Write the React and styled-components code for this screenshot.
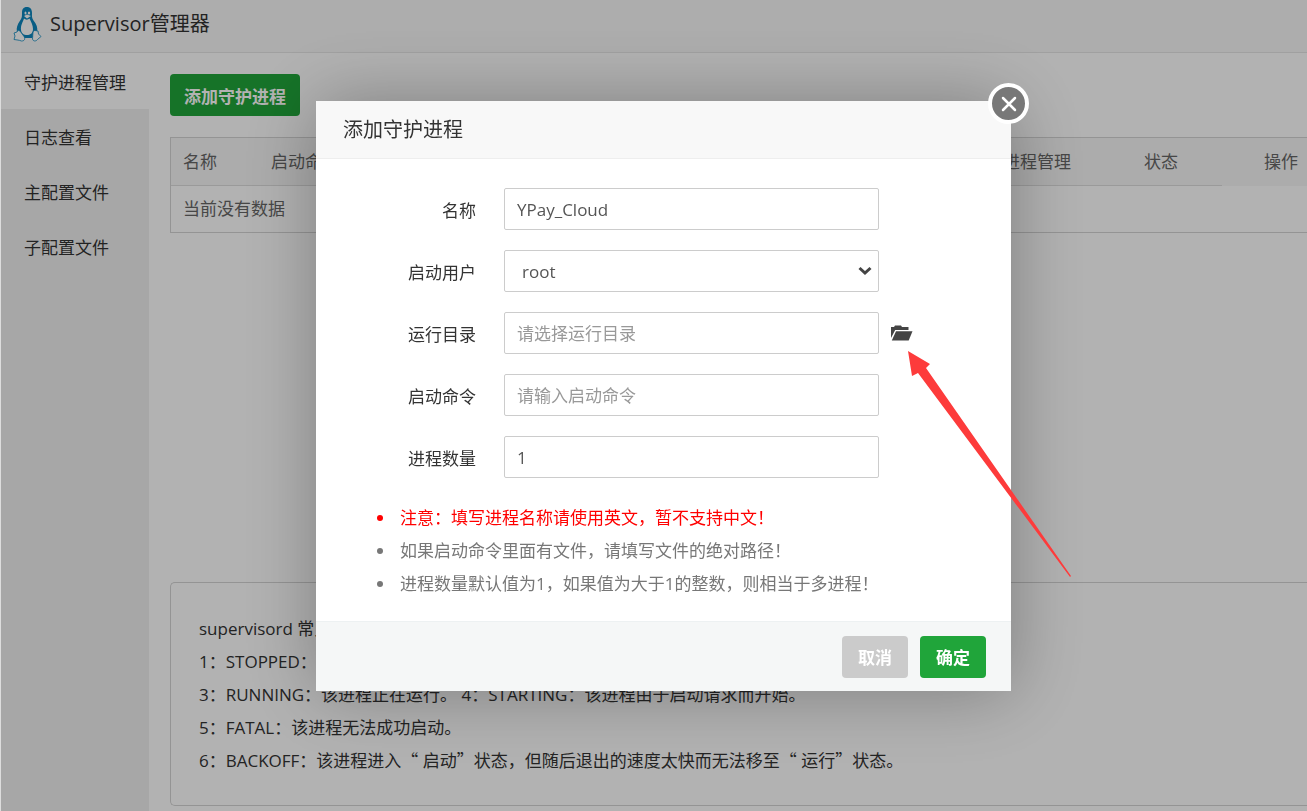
import React, { useState } from 'react'
import styled, { createGlobalStyle, css } from 'styled-components'

const MENUS = ['守护进程管理', '日志查看', '主配置文件', '子配置文件']

function App() {
  const [menu, setMenu] = useState(0)
  const [name, setName] = useState('YPay_Cloud')
  const [user, setUser] = useState('root')
  const [path, setPath] = useState('')
  const [command, setCommand] = useState('')
  const [count, setCount] = useState('1')

  return (
    <>
      <GlobalStyle />
      <StPage>
        <StHeader>
          <Penguin />
          <StHeaderTitle>Supervisor管理器</StHeaderTitle>
        </StHeader>
        <StBody>
          <StSide>
            {MENUS.map((item, i) => (
              <StSideItem key={item} $active={i === menu} onClick={() => setMenu(i)}>
                {item}
              </StSideItem>
            ))}
          </StSide>
          <StMain>
            <StButton $wide>添加守护进程</StButton>
            <StTableWrap>
              <StTable>
                <colgroup>
                  <col width="88" />
                  <col />
                  <col width="141" />
                  <col width="90" />
                  <col width="85" />
                </colgroup>
                <thead>
                  <tr>
                    <StTh>名称</StTh>
                    <StTh>启动命令</StTh>
                    <StTh>进程管理</StTh>
                    <StTh>状态</StTh>
                    <StTh $last>操作</StTh>
                  </tr>
                </thead>
                <tbody>
                  <tr>
                    <StTd colSpan={5}>当前没有数据</StTd>
                  </tr>
                </tbody>
              </StTable>
            </StTableWrap>
            <StNotes>
              <p>supervisord 常见进程状态说明：</p>
              <p>1：STOPPED：该进程已停止。</p>
              <p>3：RUNNING：该进程正在运行。 4：STARTING：该进程由于启动请求而开始。</p>
              <p>5：FATAL：该进程无法成功启动。</p>
              <p>
                6：BACKOFF：该进程进入<StQuote>“</StQuote> 启动<StQuote>”</StQuote>状态，但随后退出的速度太快而无法移至<StQuote>“</StQuote> 运行<StQuote>”</StQuote>状态。
              </p>
            </StNotes>
          </StMain>
        </StBody>
      </StPage>

      <StShade>
        <StModal role="dialog" aria-labelledby="modal-title">
          <StModalHeader id="modal-title">添加守护进程</StModalHeader>
          <StForm>
            <StRow>
              <StLabel htmlFor="name">名称</StLabel>
              <StInput id="name" value={name} onChange={(e) => setName(e.target.value)} />
            </StRow>
            <StRow>
              <StLabel htmlFor="user">启动用户</StLabel>
              <StSelectBox>
                <StSelect id="user" value={user} onChange={(e) => setUser(e.target.value)}>
                  <option>root</option>
                  <option>www</option>
                </StSelect>
                <StArrow viewBox="0 0 14 10">
                  <path d="M1.500 2l5.500 5 5.500-5" />
                </StArrow>
              </StSelectBox>
            </StRow>
            <StRow>
              <StLabel htmlFor="path">运行目录</StLabel>
              <StInput
                id="path"
                placeholder="请选择运行目录"
                value={path}
                onChange={(e) => setPath(e.target.value)}
              />
              <StFolder aria-label="选择目录">
                <svg width="22" height="16" viewBox="0 0 22 16">
                  <path d="M0 13V2h3l1-1.500h6L11 2h6.500v3H4.200z" />
                  <path d="M5 6.200h16.500L17.700 15.500H.8z" />
                </svg>
                <StPointer viewBox="0 0 164 228">
                  <path d="M0 0L22 13L18 17L163 225L162 226L10 22L4 25Z" />
                </StPointer>
              </StFolder>
            </StRow>
            <StRow>
              <StLabel htmlFor="command">启动命令</StLabel>
              <StInput
                id="command"
                placeholder="请输入启动命令"
                value={command}
                onChange={(e) => setCommand(e.target.value)}
              />
            </StRow>
            <StRow>
              <StLabel htmlFor="count">进程数量</StLabel>
              <StInput id="count" value={count} onChange={(e) => setCount(e.target.value)} />
            </StRow>
            <StTips>
              <StTip $warn>注意：填写进程名称请使用英文，暂不支持中文！</StTip>
              <StTip>如果启动命令里面有文件，请填写文件的绝对路径！</StTip>
              <StTip>进程数量默认值为1，如果值为大于1的整数，则相当于多进程！</StTip>
            </StTips>
          </StForm>
          <StModalFooter>
            <StButton $gray>取消</StButton>
            <StButton>确定</StButton>
          </StModalFooter>
          <StClose aria-label="关闭">
            <svg width="16" height="16" viewBox="0 0 16 16">
              <path d="M2 2l12 12M14 2L2 14" />
            </svg>
          </StClose>
        </StModal>
      </StShade>
    </>
  )
}

function Penguin() {
  return (
    <svg width="29" height="36" viewBox="0 0 29 36">
      <path
        fill="#0d86bd"
        d="M14 1C10 1 9 3.500 9 7c0 4 0 5-2.500 8.500C4.500 18.500 3 22 4 26l5 6h10l5-6c1-4-.5-8-3.500-11.500C18.500 11.500 19 10 19 7c0-4-2-6-5-6z"
      />
      <path
        fill="#fff"
        d="M11 12.500C10 16 7.500 19 8 24c.5 4 3 5 6 5s6-1.500 6-6c0-4-2-7-3.500-10.500-1.500 1.500-4 1.500-5.500 0z"
      />
      <ellipse cx="12.500" cy="7" rx="1" ry="1.500" fill="#fff" />
      <ellipse cx="16" cy="7" rx="1.200" ry="1.500" fill="#fff" />
      <path fill="#fff" d="M11 10l3-1.500 4 1.500-4 2.500z" />
      <path
        fill="#fff"
        stroke="#0d86bd"
        strokeWidth="0.8"
        d="M5 24l-1 2-3 1 1 3-1 3.500c3 .5 5 .5 7.500 1.500 3 0 4-2 2.500-4.500L7 25zM22 24.500c-2.500 0-2 3-2.500 8.500.5 2.500 3.500 2.500 5 .5l3.500-3-2.500-2.500-.5-3z"
      />
    </svg>
  )
}

export default App

const GlobalStyle = createGlobalStyle`
  * {
    box-sizing: border-box;
  }
  body {
    margin: 0;
    overflow: hidden;
    background: #ffffff;
    color: #333333;
    font-family: "Open Sans", "Noto Sans CJK SC", sans-serif;
    font-size: 17px;
  }
  button, input, select {
    font: inherit;
  }
  p, ul {
    margin: 0;
    padding: 0;
  }
`
const StPage = styled.div`
  min-height: 100vh;
  display: flex;
  flex-direction: column;
  border-left: 1px solid #dddddd;
`
const StHeader = styled.header`
  height: 53px;
  padding: 0 12px 4px;
  display: flex;
  align-items: center;
  gap: 8px;
  background: #f8f8f8;
  border-bottom: 1px solid #e6e6e6;
`
const StHeaderTitle = styled.h1`
  margin: 0;
  font-size: 20px;
  font-weight: 400;
  line-height: 26px;
`
const StBody = styled.div`
  flex: 1;
  display: flex;
`
const StSide = styled.nav`
  width: 148px;
  flex-shrink: 0;
  background: #f0f0f0;
`
const StSideItem = styled.button`
  width: 100%;
  height: ${(props) => (props.$active ? 56 : 55)}px;
  padding: 0 0 0 23px;
  display: block;
  border: none;
  text-align: left;
  white-space: nowrap;
  color: #333333;
  background: ${(props) => (props.$active ? '#ffffff' : 'transparent')};
  cursor: pointer;
`
const StMain = styled.main`
  flex: 1;
  min-width: 0;
  padding: 21px 0 5px 21px;
  display: flex;
  flex-direction: column;
  align-items: flex-start;
`
const StButton = styled.button`
  height: 42px;
  padding: 0 ${(props) => (props.$wide ? 14 : 16)}px;
  border: none;
  border-radius: 4px;
  color: #ffffff;
  font-weight: 700;
  background: ${(props) => (props.$gray ? '#cbcbcb' : '#20a53a')};
  cursor: pointer;
`
const StTableWrap = styled.div`
  width: 100%;
  margin-top: 21px;
  border: 1px solid #d4d4d4;
  border-right: none;
`
const StTable = styled.table`
  width: 100%;
  table-layout: fixed;
  border-collapse: collapse;
`
const StTh = styled.th`
  height: 47px;
  padding: 0 12px 2px;
  font-weight: 400;
  color: #666666;
  background: #f6f6f6;
  text-align: left;
  white-space: nowrap;
  border-bottom: 1px solid #dddddd;
  ${({ $last }) =>
    $last &&
    css`
      padding-right: 9px;
      text-align: right;
      border-bottom-color: #f6f6f6;
    `}
`
const StTd = styled.td`
  height: 47px;
  padding: 0 12px 2px;
  color: #666666;
`
const StNotes = styled.div`
  width: 100%;
  margin-top: auto;
  padding: 29px 28px 28px;
  border: 1px solid #d4d4d4;
  border-right: none;
  border-radius: 5px 0 0 5px;
  line-height: 33px;
  white-space: nowrap;
`
const StQuote = styled.span`
  font-family: "Noto Sans CJK SC", sans-serif;
  line-height: 1;
`
const StShade = styled.div`
  position: fixed;
  inset: 0 0 0 1px;
  display: flex;
  align-items: flex-start;
  justify-content: center;
  padding: 101px 0 0 19px;
  background: rgba(0, 0, 0, 0.3);
`
const StModal = styled.div`
  position: relative;
  width: 695px;
  background: #ffffff;
  box-shadow: 1px 1px 70px rgba(0, 0, 0, 0.3);
`
const StModalHeader = styled.h2`
  height: 58px;
  margin: 0;
  padding: 0 27px;
  font-size: 20px;
  font-weight: 400;
  line-height: 58px;
  background: #f8f8f8;
  border-bottom: 1px solid #eeeeee;
`
const StForm = styled.div`
  padding: 29px 28px 21px;
`
const StRow = styled.div`
  display: flex;
  align-items: center;
  margin-bottom: 20px;
`
const StLabel = styled.label`
  width: 132px;
  margin-right: 28px;
  text-align: right;
`
const field = css`
  width: 375px;
  height: 42px;
  border: 1px solid #cccccc;
  border-radius: 2px;
  outline: none;
  color: #555555;
  background: #ffffff;
`
const StInput = styled.input`
  ${field}
  padding: 0 12px;
  &::placeholder {
    color: #999999;
    opacity: 1;
  }
`
const StSelectBox = styled.div`
  position: relative;
`
const StSelect = styled.select`
  ${field}
  display: block;
  padding: 0 17px;
  appearance: none;
`
const StArrow = styled.svg`
  position: absolute;
  top: 16px;
  right: 7px;
  width: 14px;
  height: 10px;
  fill: none;
  stroke: #444444;
  stroke-width: 3;
  pointer-events: none;
`
const StFolder = styled.button`
  position: relative;
  height: 16px;
  margin-left: 12px;
  padding: 0;
  display: flex;
  border: none;
  background: none;
  fill: #444444;
  cursor: pointer;
`
const StPointer = styled.svg`
  position: absolute;
  top: 26px;
  left: 17px;
  width: 164px;
  height: 228px;
  fill: #fd3b3b;
  pointer-events: none;
`
const StTips = styled.ul`
  padding: 3px 0 0 33px;
  line-height: 33px;
  list-style: none;
`
const StTip = styled.li`
  display: flex;
  align-items: center;
  gap: 17px;
  color: ${(props) => (props.$warn ? '#ff0000' : '#777777')};
  &::before {
    content: '';
    width: 6px;
    height: 6px;
    border-radius: 50%;
    background: currentColor;
  }
`
const StModalFooter = styled.div`
  height: 70px;
  padding: 0 25px;
  display: flex;
  align-items: center;
  justify-content: flex-end;
  gap: 12px;
  background: #f5f7f7;
  border-top: 1px solid #edf1f2;
`
const StClose = styled.button`
  position: absolute;
  top: -18px;
  right: -18px;
  width: 41px;
  height: 41px;
  padding: 0;
  display: flex;
  align-items: center;
  justify-content: center;
  border: 4px solid #ffffff;
  border-radius: 50%;
  background: #787878;
  cursor: pointer;
  path {
    stroke: #ffffff;
    stroke-width: 2.5;
    stroke-linecap: round;
  }
`
